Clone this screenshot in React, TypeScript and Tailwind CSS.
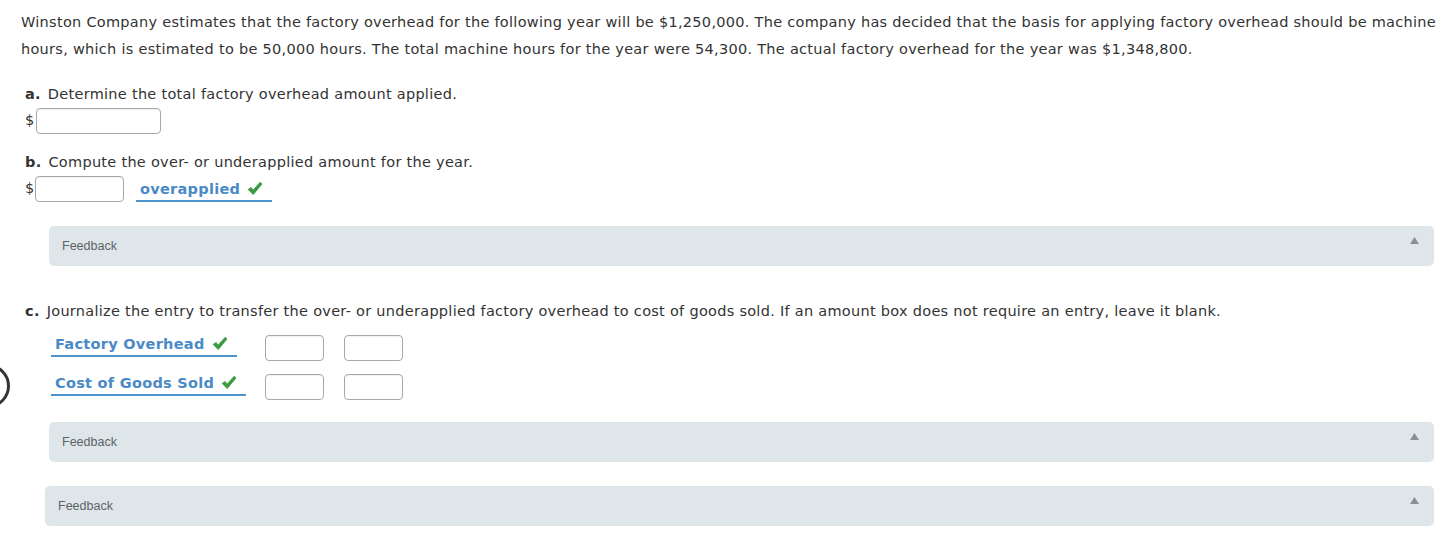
import React from "react";

function Check() {
  return (
    <svg width="16" height="15" viewBox="0 0 16 15" className="inline-block ml-[7px] -mt-[3px] align-middle">
      <path d="M1.2 8.4 L4.2 6.4 L6 9.2 L13.2 1.2 L15 3 L6.2 13.6 Z" fill="#3b9a3f" stroke="#3b9a3f" strokeWidth="0.8" strokeLinejoin="round" />
    </svg>
  );
}

function Box({ w }: { w: string }) {
  return <div className={`${w} h-[26px] border border-[#a8a8a8] rounded-[4px] bg-white shadow-[inset_0_1px_1px_rgba(0,0,0,0.06)]`} />;
}

function Feedback({ left }: { left: string }) {
  return (
    <div className={`${left} mr-[9px] h-[40px] rounded-[5px] bg-[#dfe6e9] flex items-center justify-between pl-[13px] pr-[15px] tracking-normal`}>
      <span className="font-['Liberation_Sans',Arial,sans-serif] text-[12.5px] text-[#5b6366]">Feedback</span>
      <svg width="9" height="7" viewBox="0 0 9 7" className="-mt-[11px]">
        <path d="M4.5 0 L9 7 L0 7 Z" fill="#8a8f92" />
      </svg>
    </div>
  );
}

function Pick({ label }: { label: string }) {
  return (
    <span className="inline-block border-b-2 border-[#4f93cc] pl-[4px] pr-[9px] font-bold text-[#4a8ac6] leading-[22px]">
      {label}
      <Check />
    </span>
  );
}

function JournalRow({ label }: { label: string }) {
  return (
    <div className="flex items-start">
      <div className="w-[214px] -mt-[2px]">
        <Pick label={label} />
      </div>
      <div className="flex gap-[20px]">
        <Box w="w-[59px]" />
        <Box w="w-[59px]" />
      </div>
    </div>
  );
}

export default function App() {
  return (
    <div className="relative min-h-[549px] bg-white font-['DejaVu_Sans',Verdana,sans-serif] text-[14.5px] tracking-[0.28px] text-[#333] pt-[9px] pl-[21px] overflow-hidden">
      <div className="absolute left-[-34px] top-[364px] w-[44px] h-[44px] rounded-full border-[3px] border-[#333]" />

      <p className="leading-[27px]">
        <span className="block whitespace-nowrap">
          Winston Company estimates that the factory overhead for the following year will be $1,250,000. The company has decided that the basis for applying factory overhead should be machine
        </span>
        <span className="block whitespace-nowrap">
          hours, which is estimated to be 50,000 hours. The total machine hours for the year were 54,300. The actual factory overhead for the year was $1,348,800.
        </span>
      </p>

      <div className="pl-[4px] mt-[18px]">
        <div className="leading-[27px]">
          <span className="font-bold mr-[7px]">a.</span>Determine the total factory overhead amount applied.
        </div>
        <div className="flex items-center">
          <span className="w-[11px]">$</span>
          <Box w="w-[125px]" />
        </div>
      </div>

      <div className="pl-[4px] mt-[15px]">
        <div className="leading-[27px]">
          <span className="font-bold mr-[7px]">b.</span>Compute the over- or underapplied amount for the year.
        </div>
        <div className="flex items-center">
          <span className="w-[10px]">$</span>
          <Box w="w-[89px]" />
          <span className="ml-[12px] mt-[2px]">
            <Pick label="overapplied" />
          </span>
        </div>
      </div>

      <div className="mt-[24px]">
        <Feedback left="ml-[28px]" />
      </div>

      <div className="pl-[4px] mt-[32px]">
        <div className="leading-[27px] whitespace-nowrap">
          <span className="font-bold mr-[7px]">c.</span>Journalize the entry to transfer the over- or underapplied factory overhead to cost of goods sold. If an amount box does not require an entry, leave it blank.
        </div>
        <div className="pl-[26px] mt-[10px] flex flex-col gap-[13px]">
          <JournalRow label="Factory Overhead" />
          <JournalRow label="Cost of Goods Sold" />
        </div>
      </div>

      <div className="mt-[22px]">
        <Feedback left="ml-[28px]" />
      </div>
      <div className="mt-[24px]">
        <Feedback left="ml-[24px]" />
      </div>
    </div>
  );
}
